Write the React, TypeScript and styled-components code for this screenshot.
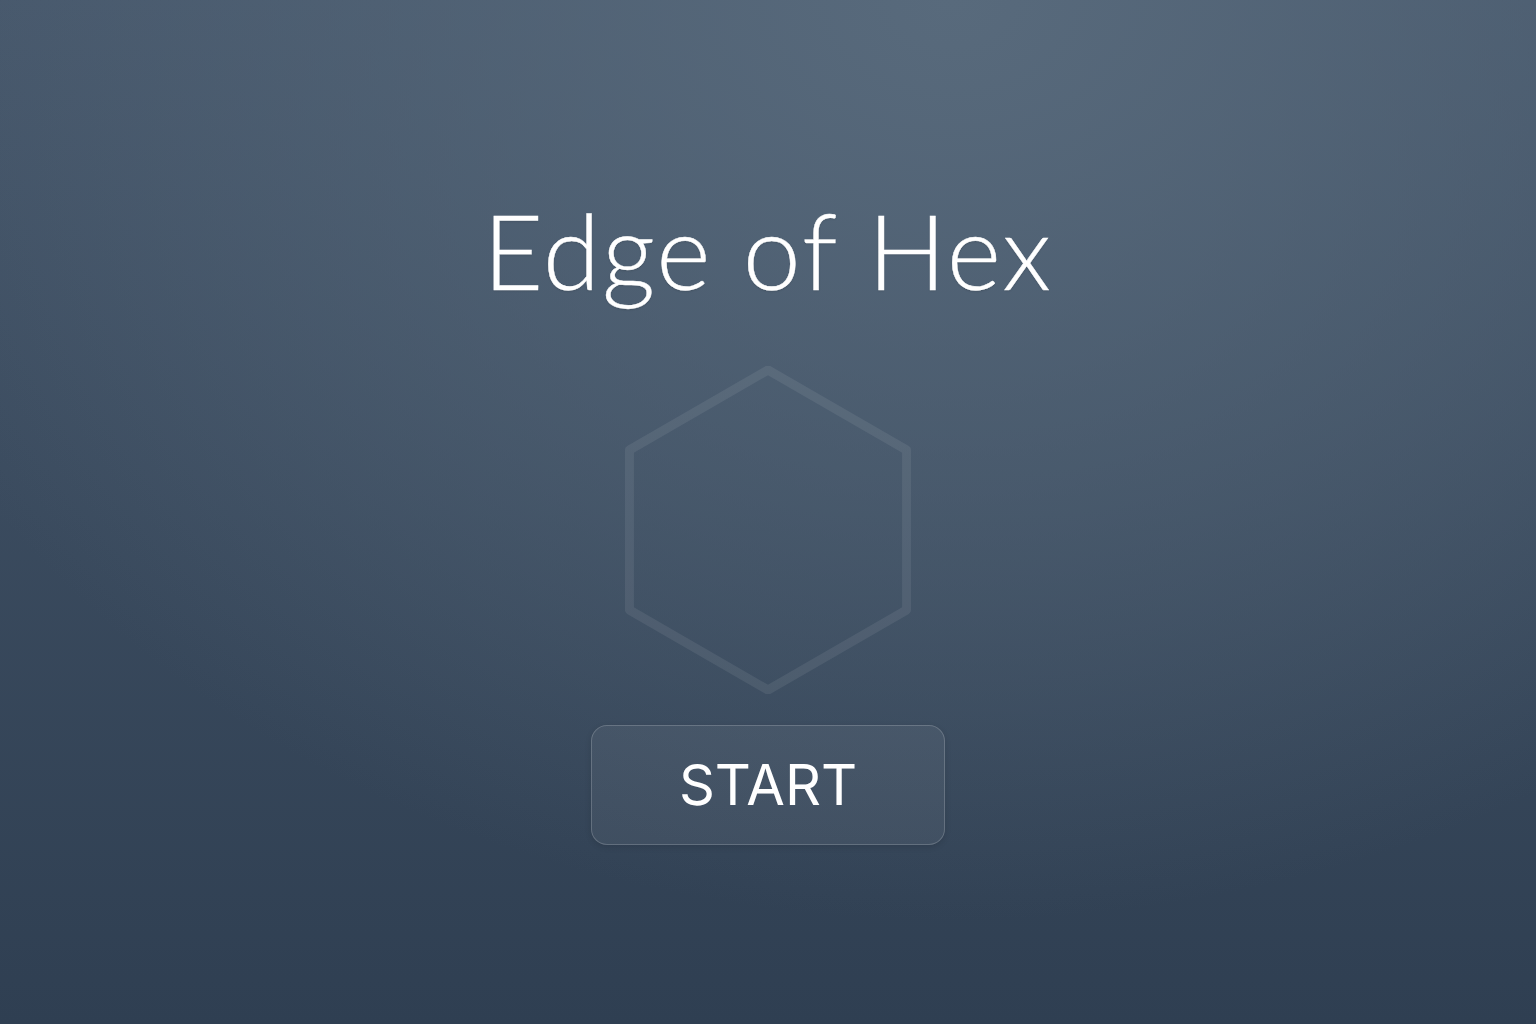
import React from "react";
import styled, { createGlobalStyle } from "styled-components";

const Global = createGlobalStyle`
  html, body { margin: 0; padding: 0; height: 100%; }
  body { font-family: "Inter", "Liberation Sans", sans-serif; }
  #root { min-height: 100vh; }
`;

const Screen = styled.main`
  min-height: 100vh;
  display: flex;
  flex-direction: column;
  align-items: center;
  background:
    radial-gradient(ellipse 75% 90% at 62% 0%, rgba(88, 106, 124, 1) 0%, rgba(88, 106, 124, 0) 100%),
    linear-gradient(180deg, #45566a 0%, #2f3f52 100%);
  padding-top: 188px;
  box-sizing: border-box;
`;

const Title = styled.h1`
  margin: 0;
  font-family: "Lato", "Liberation Sans", sans-serif;
  font-weight: 300;
  font-size: 104px;
  line-height: 1.2;
  color: #ffffff;
  letter-spacing: 2px;
  -webkit-text-stroke: 0.4px #ffffff;
  text-shadow: 0 1px 2px rgba(0, 0, 0, 0.15);
`;

const HexWrap = styled.div`
  margin-top: 53px;
  width: 288px;
  height: 328px;
  display: flex;
  align-items: center;
  justify-content: center;
`;

const StartButton = styled.button`
  margin-top: 31px;
  width: 354px;
  height: 120px;
  border-radius: 16px;
  border: 1.5px solid rgba(255, 255, 255, 0.18);
  background: rgba(255, 255, 255, 0.06);
  box-shadow: 0 2px 6px rgba(0, 0, 0, 0.12);
  color: #ffffff;
  font-family: "Inter", "Liberation Sans", sans-serif;
  font-weight: 400;
  font-size: 56px;
  letter-spacing: 0px;
  cursor: pointer;
  display: flex;
  align-items: center;
  justify-content: center;
  padding: 0;
`;

const Hexagon = () => {
  const cx = 144;
  const cy = 164;
  const r = 160;
  const pts = Array.from({ length: 6 }, (_, i) => {
    const a = (Math.PI / 180) * (60 * i - 90);
    return `${(cx + r * Math.cos(a)).toFixed(2)},${(cy + r * Math.sin(a)).toFixed(2)}`;
  }).join(" ");
  return (
    <svg width="288" height="328" viewBox="0 0 288 328">
      <polygon
        points={pts}
        fill="none"
        stroke="rgba(255,255,255,0.075)"
        strokeWidth="9"
        strokeLinejoin="round"
      />
    </svg>
  );
};

export default function App() {
  return (
    <>
      <Global />
      <Screen>
        <Title>Edge of Hex</Title>
        <HexWrap>
          <Hexagon />
        </HexWrap>
        <StartButton>START</StartButton>
      </Screen>
    </>
  );
}
